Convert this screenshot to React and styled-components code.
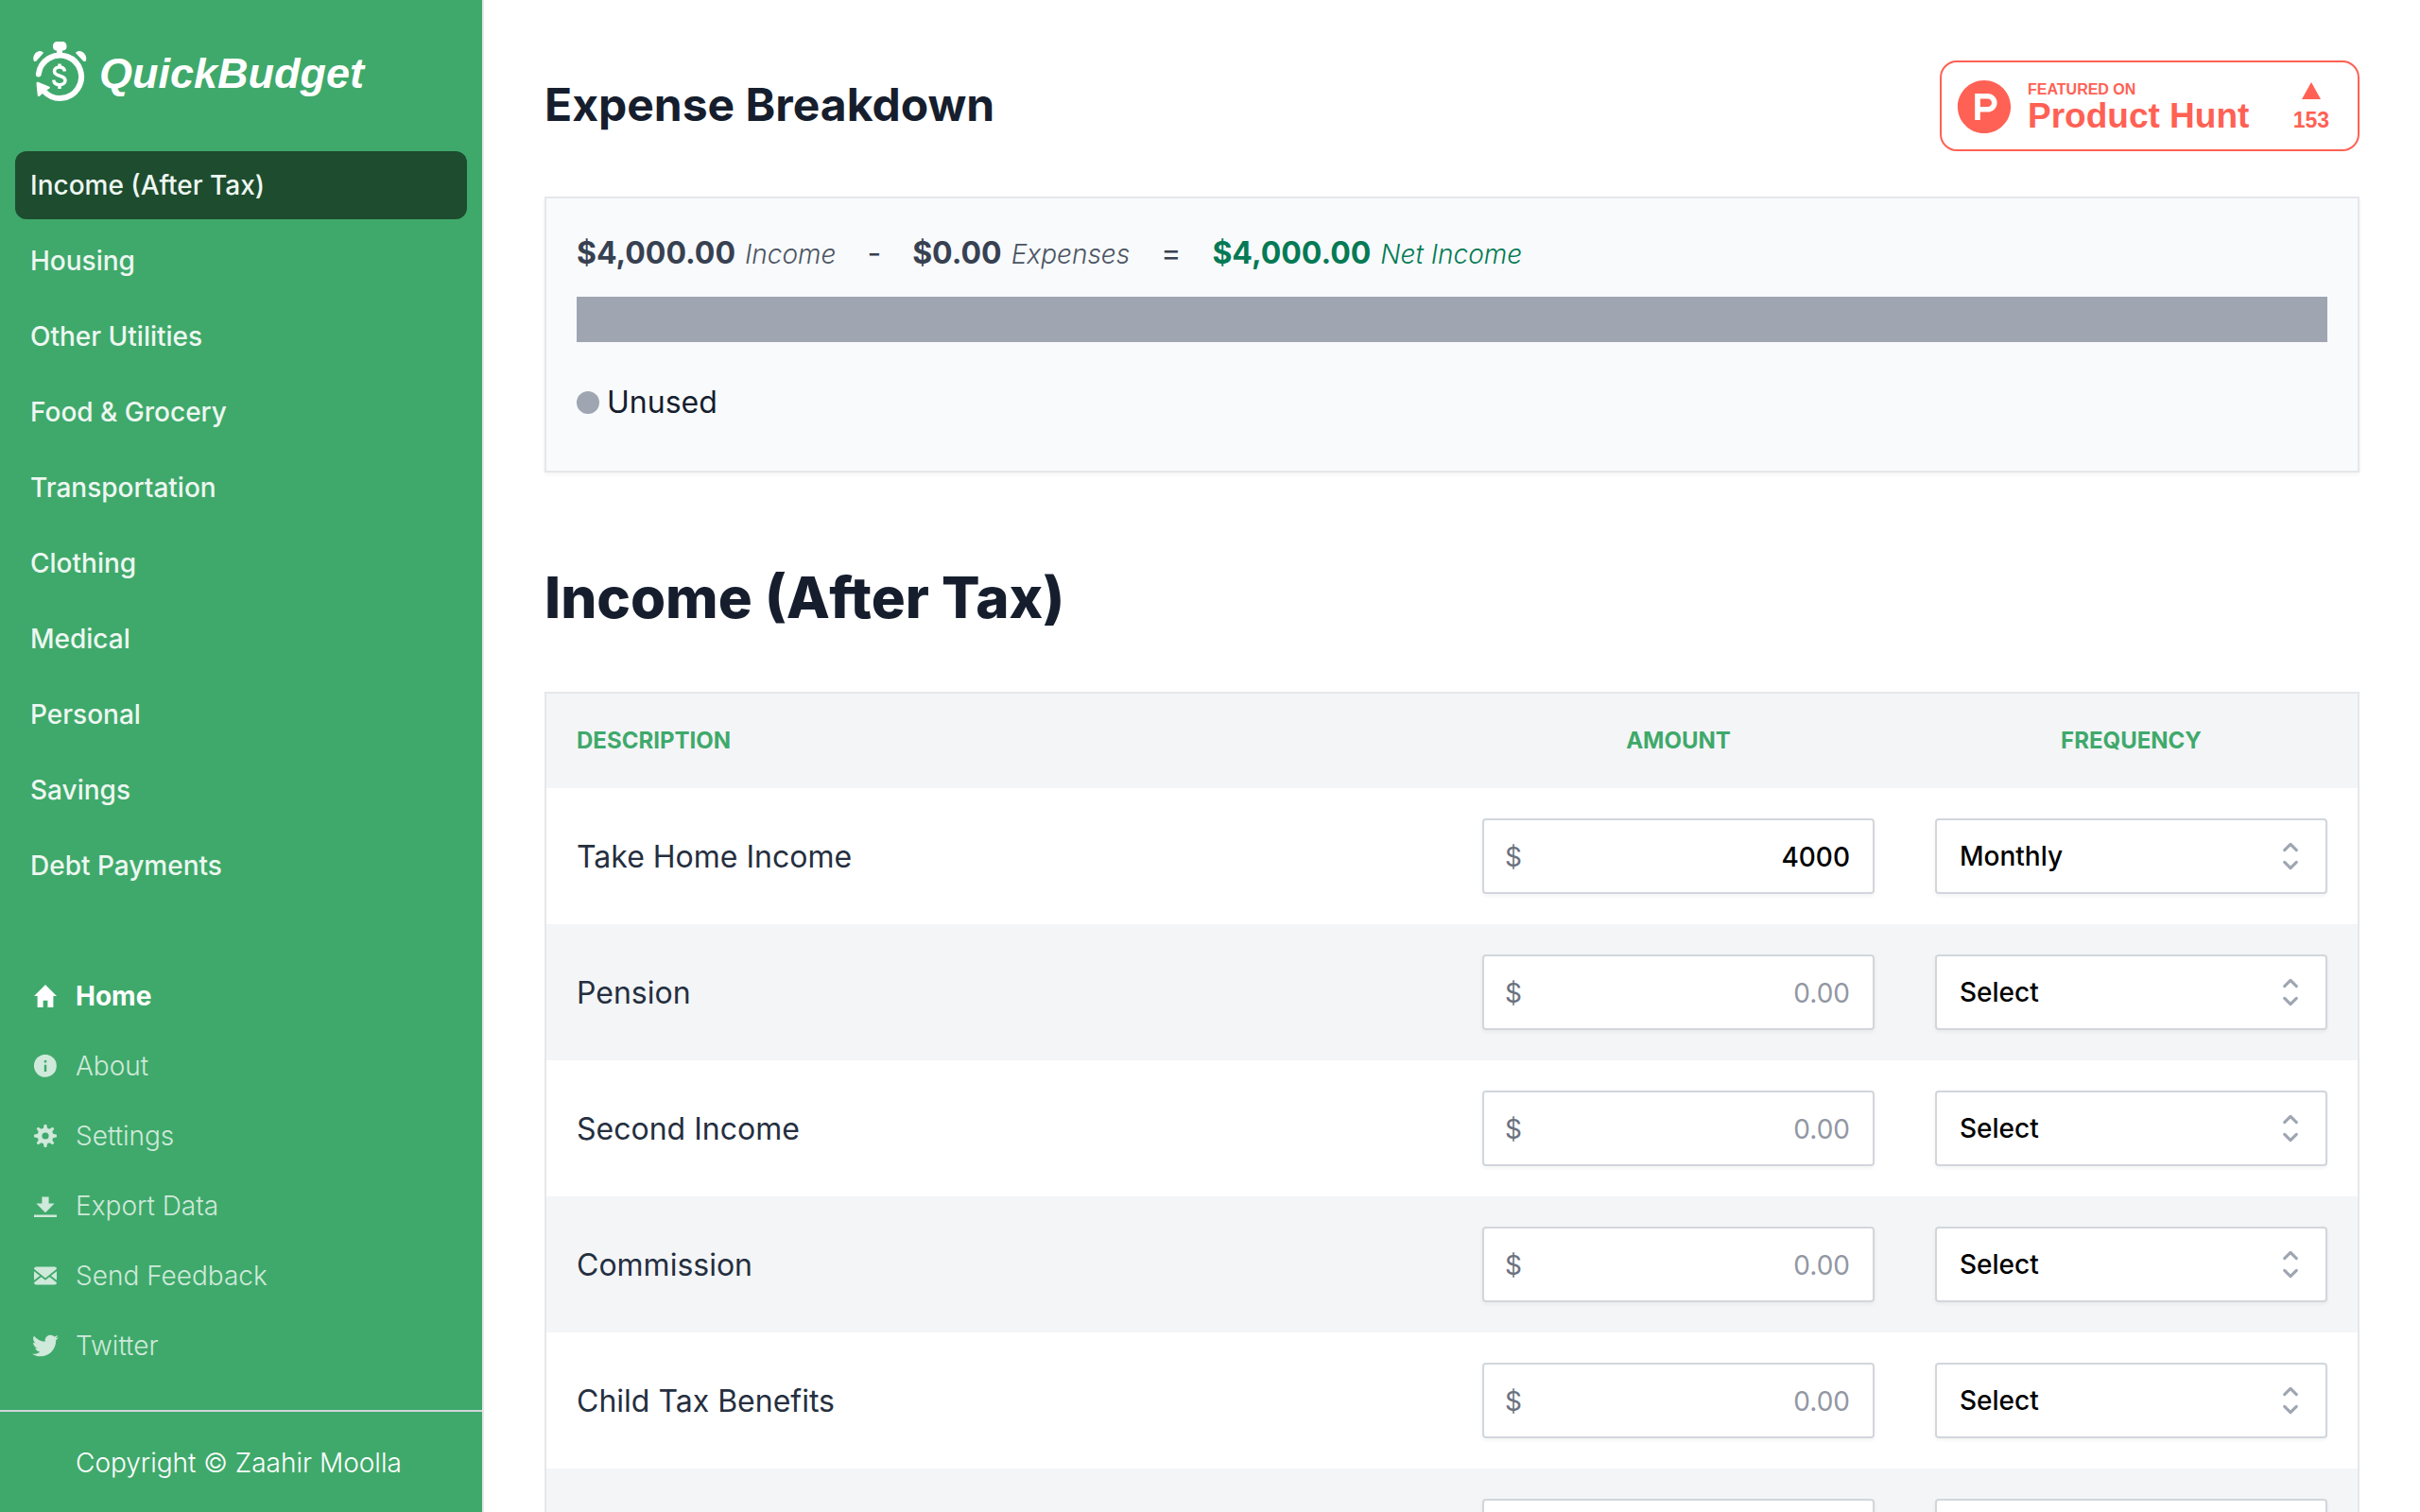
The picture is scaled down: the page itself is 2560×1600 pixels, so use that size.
import React, { useState } from "react";
import styled, { createGlobalStyle } from "styled-components";
import { FaProductHunt, FaTwitter } from "react-icons/fa";

const GlobalStyle = createGlobalStyle`
  *, *::before, *::after { box-sizing: border-box; }
  body {
    margin: 0;
    background: #ffffff;
    color: #161e2e;
    font-family: Inter, "Liberation Sans", sans-serif;
    font-size: 28px;
    line-height: 40px;
  }
  button, input, select { font: inherit; color: inherit; }
`;

const green = "#3fa96b";

const Shell = styled.div`
  display: flex;
  height: 100vh;
  overflow: hidden;
`;

const Sidebar = styled.aside`
  flex: 0 0 512px;
  display: flex;
  flex-direction: column;
  background: ${green};
  border-right: 2px solid #e5e7eb;
`;

const Brand = styled.a`
  display: flex;
  align-items: center;
  gap: 12px;
  padding: 44px 34px 52px;
  color: #ffffff;
  text-decoration: none;
`;

const BrandName = styled.span`
  padding-top: 4px;
  font-family: "Liberation Sans", Arial, sans-serif;
  font-size: 45px;
  font-style: italic;
  font-weight: 700;
  line-height: 60px;
`;

const CategoryNav = styled.nav`
  display: flex;
  flex-direction: column;
  gap: 8px;
  padding: 0 16px;
`;

const Category = styled.button`
  padding: 16px;
  border: 0;
  border-radius: 12px;
  background: ${(p) => (p.$active ? "#1e4c2f" : "transparent")};
  color: #edf7f1;
  font-weight: 500;
  line-height: 40px;
  text-align: left;
  cursor: pointer;
`;

const LinkNav = styled.nav`
  display: flex;
  flex-direction: column;
  gap: 34px;
  margin-top: auto;
  padding: 0 32px 48px;
`;

const SideLink = styled.a`
  display: flex;
  align-items: center;
  gap: 16px;
  color: ${(p) => (p.$active ? "#ffffff" : "#cfe9da")};
  font-weight: ${(p) => (p.$active ? 700 : 300)};
  text-decoration: none;
`;

const IconSlot = styled.span`
  display: flex;
  justify-content: center;
  flex: 0 0 32px;
`;

const Copyright = styled.footer`
  padding: 34px 0 32px 80px;
  border-top: 2px solid #d2d6dc;
  color: #ffffff;
  font-weight: 300;
`;

const Main = styled.main`
  flex: 1;
  min-width: 0;
  padding: 64px;
  overflow-y: auto;
  scrollbar-width: none;
`;

const TopBar = styled.header`
  display: flex;
  align-items: center;
  justify-content: space-between;
  margin-bottom: 48px;
`;

const PageTitle = styled.h1`
  margin: 0;
  padding-bottom: 2px;
  font-size: 48px;
  font-weight: 700;
  line-height: 64px;
`;

const Badge = styled.a`
  display: flex;
  align-items: center;
  width: 444px;
  height: 96px;
  padding: 2px 30px 0 16px;
  border: 2px solid #ff6154;
  border-radius: 18px;
  color: #ff6154;
  font-family: "Liberation Sans", Arial, sans-serif;
  font-weight: 700;
  text-decoration: none;
`;

const BadgeText = styled.span`
  display: flex;
  flex-direction: column;
  flex: 1;
  padding-left: 17px;
`;

const BadgeSmall = styled.span`
  font-size: 16px;
  line-height: 20px;
`;

const BadgeLarge = styled.span`
  font-size: 37px;
  line-height: 36px;
`;

const Votes = styled.span`
  display: flex;
  flex-direction: column;
  align-items: center;
  gap: 8px;
  padding-top: 2px;
  font-size: 23px;
  line-height: 28px;
`;

const Summary = styled.section`
  padding: 34px 32px 32px;
  border: 2px solid #e5e7eb;
  background: #f9fafc;
  box-shadow: 0 2px 4px rgba(0, 0, 0, 0.05);
`;

const Equation = styled.div`
  display: flex;
  align-items: baseline;
  gap: 33px;
  font-size: 32px;
  line-height: 48px;
  color: #374151;
`;

const Figure = styled.span`
  color: ${(p) => (p.$positive ? "#057a55" : "#374151")};
`;

const Amount = styled.strong`
  font-weight: 700;
`;

const Caption = styled.em`
  margin-left: 10px;
  color: ${(p) => (p.$positive ? "#057a55" : "#4b5563")};
  font-size: 28px;
  font-weight: 300;
  line-height: 40px;
`;

const Bar = styled.div`
  display: flex;
  height: 48px;
  margin: 22px 0 40px;
`;

const Segment = styled.div`
  background: ${(p) => p.$color};
`;

const Legend = styled.ul`
  display: flex;
  margin: 0;
  padding: 0 0 16px;
  list-style: none;
`;

const LegendItem = styled.li`
  display: flex;
  align-items: center;
  gap: 8px;
  font-size: 32px;
  line-height: 48px;
`;

const Dot = styled.span`
  width: 24px;
  height: 24px;
  border-radius: 50%;
  background: ${(p) => p.$color};
`;

const SectionTitle = styled.h2`
  margin: 96px 0 64px;
  font-size: 60px;
  font-weight: 800;
  line-height: 72px;
`;

const TableFrame = styled.div`
  border: 2px solid #e5e7eb;
`;

const Table = styled.table`
  width: 100%;
  border-collapse: collapse;
  table-layout: fixed;
`;

const HeadCell = styled.th`
  width: ${(p) => p.$width};
  padding: 30px 32px;
  background: #f4f5f7;
  color: ${green};
  font-size: 24px;
  font-weight: 700;
  line-height: 40px;
  text-align: ${(p) => p.$align || "center"};
  text-transform: uppercase;
`;

const Row = styled.tr`
  background: #ffffff;
  &:nth-child(even) { background: #f4f5f7; }
`;

const Cell = styled.td`
  padding: 32px;
`;

const RowLabel = styled.label`
  display: block;
  padding-top: 2px;
  color: #252f3f;
  font-size: 32px;
  line-height: 48px;
`;

const Field = styled.div`
  position: relative;
  display: flex;
  align-items: center;
  height: 80px;
  border: 2px solid #d2d6dc;
  border-radius: 4px;
  background: #ffffff;
  box-shadow: 0 2px 4px rgba(0, 0, 0, 0.05);
`;

const Currency = styled.span`
  padding: 2px 0 0 22px;
  color: #6b7280;
`;

const AmountInput = styled.input`
  flex: 1;
  min-width: 0;
  height: 100%;
  padding: 2px 24px 0 16px;
  border: 0;
  outline: 0;
  background: transparent;
  color: #000000;
  font-weight: 500;
  text-align: right;
  &::placeholder { color: #9297a3; font-weight: 400; opacity: 1; }
`;

const FrequencySelect = styled.select`
  width: 100%;
  height: 100%;
  padding: 0 72px 0 24px;
  border: 0;
  outline: 0;
  appearance: none;
  background: transparent;
  color: #000000;
  font-weight: 500;
`;

const Chevrons = styled.svg`
  position: absolute;
  right: 16px;
  width: 42px;
  height: 42px;
  pointer-events: none;
`;

const Zicon = ({ d }) => (
  <svg width="24" height="24" viewBox="0 0 20 20" fill="currentColor" aria-hidden="true">
    <path d={d} />
  </svg>
);

const iconPaths = {
  home: "M8 20H3V10H0L10 0l10 10h-3v10h-5v-6H8v6z",
  info: "M2.93 17.07A10 10 0 1 1 17.07 2.93 10 10 0 0 1 2.93 17.07zM9 11v4h2V9H9v2zm0-6v2h2V5H9z",
  cog: "M3.94 6.5L2.22 3.64l1.42-1.42L6.5 3.94c.52-.3 1.1-.54 1.7-.7L9 0h2l.8 3.24c.6.16 1.18.4 1.7.7l2.86-1.72 1.42 1.42-1.72 2.86c.3.52.54 1.1.7 1.7L20 9v2l-3.24.8c-.16.6-.4 1.18-.7 1.7l1.72 2.86-1.42 1.42-2.86-1.72c-.52.3-1.1.54-1.7.7L11 20H9l-.8-3.24c-.6-.16-1.18-.4-1.7-.7l-2.86 1.72-1.42-1.42 1.72-2.86c-.3-.52-.54-1.1-.7-1.7L0 11V9l3.24-.8c.16-.6.4-1.18.7-1.7zM10 13a3 3 0 1 0 0-6 3 3 0 0 0 0 6z",
  download: "M13 8V2H7v6H2l8 8 8-8h-5zM0 18h20v2H0v-2z",
  mail: "M18 2a2 2 0 0 1 2 2v12a2 2 0 0 1-2 2H2a2 2 0 0 1-2-2V4c0-1.1.9-2 2-2h16zm-4.37 9.1L20 16v-2l-5.12-3.9L20 6V4l-10 8L0 4v2l5.12 4.1L0 14v2l6.37-4.9L10 14l3.63-2.9z",
};

const StopwatchLogo = () => (
  <svg width="59" height="64" viewBox="0 0 59 64" fill="none" aria-hidden="true">
    <path
      d="M22 5C22 1.500 24 0 26.500 0h5.500C34.500 0 36.500 1.500 36.500 5s-2 4.500-4.500 4.500V13h-6V9.500C24 9.500 22 8.500 22 5z"
      fill="currentColor"
    />
    <path d="M2 21C-.3 16.500 3 10 8.500 10c1.500 0 3 1 3.500 2L4.300 20.800z" fill="currentColor" />
    <path d="M56.500 21c2.500-4.500-1.500-11-7-11-1.500 0-3 1-3.500 2l8.200 8.800z" fill="currentColor" />
    <path d="M6.800 34.500A22.700 22.700 0 1 1 13 53" stroke="currentColor" strokeWidth="6" strokeLinecap="round" />
    <path
      d="M4.500 44.500c0-1.500 1-2 2.300-1.500l11 4.500c1.500.7 1.500 1.700 0 2.500l-3 1.500-5.500 5-1.200 1c-1.500 1-2.200.5-2.400-1z"
      fill="currentColor"
    />
    <path
      d="M34.500 31.500c-.5-3-2.500-4.500-5.500-4.500-3.200 0-5.500 1.700-5.500 4.500 0 6.200 11.500 3.200 11.500 9.500 0 2.800-2.500 4.700-6 4.700s-6-1.900-6.300-5M29 23.500v4M29 45.500v4.500"
      stroke="currentColor"
      strokeWidth="3.500"
    />
  </svg>
);

const categories = [
  "Income (After Tax)",
  "Housing",
  "Other Utilities",
  "Food & Grocery",
  "Transportation",
  "Clothing",
  "Medical",
  "Personal",
  "Savings",
  "Debt Payments",
];

const links = [
  { text: "Home", icon: "home", active: true },
  { text: "About", icon: "info" },
  { text: "Settings", icon: "cog" },
  { text: "Export Data", icon: "download" },
  { text: "Send Feedback", icon: "mail" },
  { text: "Twitter", icon: "twitter" },
];

const incomeRows = [
  { id: "take-home", label: "Take Home Income", amount: "4000", frequency: "Monthly" },
  { id: "pension", label: "Pension" },
  { id: "second", label: "Second Income" },
  { id: "commission", label: "Commission" },
  { id: "child-tax", label: "Child Tax Benefits" },
  { id: "other", label: "Other Income" },
];

const frequencies = ["Select", "Weekly", "Bi-Weekly", "Monthly", "Yearly"];

const segments = [{ name: "Unused", color: "#9fa6b2", share: 100 }];

function IncomeRow({ row }) {
  return (
    <Row>
      <Cell>
        <RowLabel htmlFor={`${row.id}-amount`}>{row.label}</RowLabel>
      </Cell>
      <Cell>
        <Field>
          <Currency>$</Currency>
          <AmountInput
            id={`${row.id}-amount`}
            inputMode="decimal"
            placeholder="0.00"
            defaultValue={row.amount}
          />
        </Field>
      </Cell>
      <Cell>
        <Field>
          <FrequencySelect aria-label={`${row.label} frequency`} defaultValue={row.frequency || "Select"}>
            {frequencies.map((f) => (
              <option key={f}>{f}</option>
            ))}
          </FrequencySelect>
          <Chevrons viewBox="0 0 20 20" fill="none" aria-hidden="true">
            <path
              d="M7 7l3-3 3 3m0 6l-3 3-3-3"
              stroke="#9fa6b2"
              strokeWidth="1.5"
              strokeLinecap="round"
              strokeLinejoin="round"
            />
          </Chevrons>
        </Field>
      </Cell>
    </Row>
  );
}

export default function App() {
  const [category, setCategory] = useState(categories[0]);

  return (
    <>
      <GlobalStyle />
      <Shell>
        <Sidebar>
          <Brand href="#">
            <StopwatchLogo />
            <BrandName>QuickBudget</BrandName>
          </Brand>
          <CategoryNav aria-label="Categories">
            {categories.map((name) => (
              <Category key={name} type="button" $active={name === category} onClick={() => setCategory(name)}>
                {name}
              </Category>
            ))}
          </CategoryNav>
          <LinkNav aria-label="Site">
            {links.map((link) => (
              <SideLink key={link.text} href="#" $active={link.active}>
                <IconSlot>
                  {link.icon === "twitter" ? <FaTwitter size={28} /> : <Zicon d={iconPaths[link.icon]} />}
                </IconSlot>
                {link.text}
              </SideLink>
            ))}
          </LinkNav>
          <Copyright>Copyright © Zaahir Moolla</Copyright>
        </Sidebar>

        <Main>
          <TopBar>
            <PageTitle>Expense Breakdown</PageTitle>
            <Badge href="#">
              <FaProductHunt size={58} />
              <BadgeText>
                <BadgeSmall>FEATURED ON</BadgeSmall>
                <BadgeLarge>Product Hunt</BadgeLarge>
              </BadgeText>
              <Votes>
                <svg width="20" height="18" viewBox="0 0 20 18" fill="currentColor" aria-hidden="true">
                  <path d="M10 0l10 18H0z" />
                </svg>
                153
              </Votes>
            </Badge>
          </TopBar>

          <Summary>
            <Equation>
              <Figure>
                <Amount>$4,000.00</Amount>
                <Caption>Income</Caption>
              </Figure>
              <span>-</span>
              <Figure>
                <Amount>$0.00</Amount>
                <Caption>Expenses</Caption>
              </Figure>
              <span>=</span>
              <Figure $positive>
                <Amount>$4,000.00</Amount>
                <Caption $positive>Net Income</Caption>
              </Figure>
            </Equation>
            <Bar>
              {segments.map((s) => (
                <Segment key={s.name} $color={s.color} style={{ width: `${s.share}%` }} />
              ))}
            </Bar>
            <Legend>
              {segments.map((s) => (
                <LegendItem key={s.name}>
                  <Dot $color={s.color} />
                  {s.name}
                </LegendItem>
              ))}
            </Legend>
          </Summary>

          <SectionTitle>{category}</SectionTitle>

          <TableFrame>
            <Table>
              <thead>
                <tr>
                  <HeadCell $width="50%" $align="left">Description</HeadCell>
                  <HeadCell $width="25%">Amount</HeadCell>
                  <HeadCell $width="25%">Frequency</HeadCell>
                </tr>
              </thead>
              <tbody>
                {incomeRows.map((row) => (
                  <IncomeRow key={row.id} row={row} />
                ))}
              </tbody>
            </Table>
          </TableFrame>
        </Main>
      </Shell>
    </>
  );
}
